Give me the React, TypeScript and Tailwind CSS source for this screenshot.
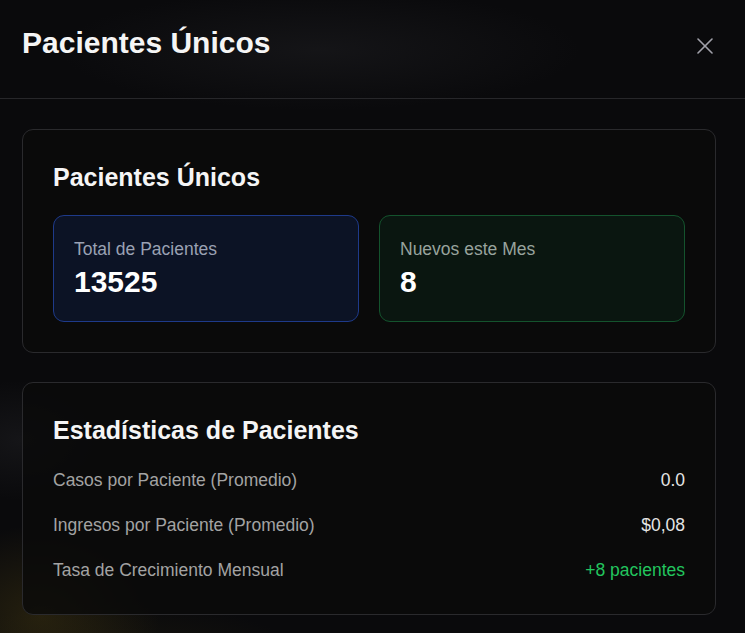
import React from 'react';

type Stat = {
  label: string;
  value: string;
  tone: 'blue' | 'green';
};

type Row = {
  label: string;
  value: string;
  highlight?: boolean;
};

const stats: Stat[] = [
  { label: 'Total de Pacientes', value: '13525', tone: 'blue' },
  { label: 'Nuevos este Mes', value: '8', tone: 'green' },
];

const rows: Row[] = [
  { label: 'Casos por Paciente (Promedio)', value: '0.0' },
  { label: 'Ingresos por Paciente (Promedio)', value: '$0,08' },
  { label: 'Tasa de Crecimiento Mensual', value: '+8 pacientes', highlight: true },
];

const StatBox: React.FC<{ stat: Stat }> = ({ stat }) => {
  const boxClass =
    stat.tone === 'blue'
      ? 'border-[#1e3a8a] bg-[#0c1325]'
      : 'border-[#14532d] bg-[#0a1610]';
  const labelClass = stat.tone === 'blue' ? 'text-[#9aa1b3]' : 'text-[#98a39d]';

  return (
    <div className={`rounded-[11px] border px-5 pt-[21px] pb-[21px] ${boxClass}`}>
      <p className={`text-[17.5px] leading-6 ${labelClass}`}>{stat.label}</p>
      <p className="mt-[3px] text-[30px] font-bold leading-9 text-white">{stat.value}</p>
    </div>
  );
};

const App: React.FC = () => {
  return (
    <div
      className="relative h-[633px] w-[745px] overflow-hidden bg-[#0a0a0c] text-white bg-[radial-gradient(ellipse_120px_90px_at_40px_615px,rgba(100,82,20,0.3),transparent),radial-gradient(ellipse_90px_60px_at_20px_440px,rgba(60,60,66,0.22),transparent),radial-gradient(ellipse_260px_60px_at_320px_50px,rgba(40,40,44,0.35),transparent),radial-gradient(ellipse_200px_80px_at_120px_680px,rgba(80,70,20,0.22),transparent)]"
      style={{ fontFamily: '"Liberation Sans", Arial, sans-serif' }}
    >
      {/* Cabecera */}
      <div className="flex h-[99px] items-start justify-between border-b border-[#27272a] pl-[22px] pr-[32px] pt-[25px]">
        <h2 className="text-[30px] font-bold leading-9 text-[#f5f5f5]">Pacientes Únicos</h2>
        <button type="button" className="mt-[13px] text-[#a1a1aa]" aria-label="Cerrar">
          <svg width="16" height="16" viewBox="0 0 16 16" fill="none" stroke="currentColor" strokeWidth="1.6" strokeLinecap="round">
            <line x1="1" y1="1" x2="15" y2="15" />
            <line x1="15" y1="1" x2="1" y2="15" />
          </svg>
        </button>
      </div>

      {/* Contenido */}
      <div className="flex flex-col gap-[29px] pl-[22px] pr-[29px] pt-[30px]">
        <section className="rounded-[11px] border border-[#2a2a2d] bg-[#0a0a0a]/80 px-[30px] pt-[32px] pb-[30px]">
          <h3 className="mb-[23px] text-[25px] font-bold leading-[30px] text-[#f5f5f5]">Pacientes Únicos</h3>
          <div className="grid grid-cols-2 gap-5">
            {stats.map((stat) => (
              <StatBox key={stat.label} stat={stat} />
            ))}
          </div>
        </section>

        <section className="rounded-[11px] border border-[#2a2a2d] bg-[#0a0a0a]/80 px-[30px] pt-[32px] pb-[31px]">
          <h3 className="mb-[23px] text-[25px] font-bold leading-[30px] text-[#f5f5f5]">Estadísticas de Pacientes</h3>
          <div className="flex flex-col gap-5">
            {rows.map((row) => (
              <div key={row.label} className="flex items-center justify-between text-[17.5px] leading-[25px]">
                <span className="text-[#a3a3a3]">{row.label}</span>
                <span className={row.highlight ? 'text-[#22c55e]' : 'text-[#e5e5e5]'}>{row.value}</span>
              </div>
            ))}
          </div>
        </section>
      </div>
    </div>
  );
};

export default App;
